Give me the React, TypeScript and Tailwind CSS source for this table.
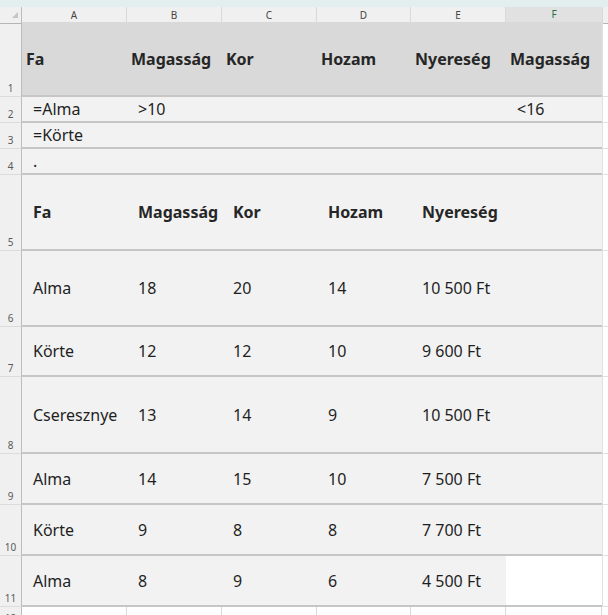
import React from 'react';

const cols = 'grid grid-cols-[22px_105px_95px_95px_94px_95px_96px_1fr]';

type Row = { n: number; h: string; cells: string[]; head?: boolean; bold?: boolean; lastWhite?: boolean };

const rows: Row[] = [
  { n: 1, h: 'h-[75px]', cells: ['Fa', 'Magasság', 'Kor', 'Hozam', 'Nyereség', 'Magasság'], head: true, bold: true },
  { n: 2, h: 'h-[26px]', cells: ['=Alma', '>10', '', '', '', '<16'] },
  { n: 3, h: 'h-[26px]', cells: ['=Körte', '', '', '', '', ''] },
  { n: 4, h: 'h-[26px]', cells: ['.', '', '', '', '', ''] },
  { n: 5, h: 'h-[76px]', cells: ['Fa', 'Magasság', 'Kor', 'Hozam', 'Nyereség', ''], bold: true },
  { n: 6, h: 'h-[76px]', cells: ['Alma', '18', '20', '14', '10 500 Ft', ''] },
  { n: 7, h: 'h-[50px]', cells: ['Körte', '12', '12', '10', '9 600 Ft', ''] },
  { n: 8, h: 'h-[77px]', cells: ['Cseresznye', '13', '14', '9', '10 500 Ft', ''] },
  { n: 9, h: 'h-[51px]', cells: ['Alma', '14', '15', '10', '7 500 Ft', ''] },
  { n: 10, h: 'h-[51px]', cells: ['Körte', '9', '8', '8', '7 700 Ft', ''] },
  { n: 11, h: 'h-[51px]', cells: ['Alma', '8', '9', '6', '4 500 Ft', ''], lastWhite: true },
];

const letters = ['A', 'B', 'C', 'D', 'E', 'F'];

function RowHeader({ n }: { n: number }) {
  return (
    <div className="flex items-end justify-center bg-[#f0f0f0] border-r border-r-[#bdbdbd] border-b border-b-[#dcdcdc] pb-[2px] text-[10px] leading-[12px] text-[#5a5a5a]">
      {n}
    </div>
  );
}

export default function App() {
  return (
    <div className="w-[608px] h-[615px] overflow-hidden bg-white font-['Noto_Sans',sans-serif] text-[16px] text-[#1f1f1f]">
      <div className="h-[7px] bg-[#e3eeee]" />
      <div className={`${cols} h-[15px]`}>
        <div className="relative bg-[#f0f0f0] border-r border-r-[#bdbdbd] border-b border-b-[#b5b5b5]">
          <svg className="absolute left-[12px] top-[5px]" width="6" height="6" viewBox="0 0 6 6">
            <polygon points="6,0 6,6 0,6" fill="#c4c4c4" />
          </svg>
        </div>
        {letters.map((l) =>
          l === 'F' ? (
            <div key={l} className="flex items-center justify-center bg-[#e1e1e1] border-b-2 border-b-[#217346] text-[10px] text-[#217346]">
              {l}
            </div>
          ) : (
            <div key={l} className="flex items-center justify-center bg-[#f0f0f0] border-r border-r-[#d9d9d9] border-b border-b-[#b5b5b5] text-[10px] text-[#444]">
              {l}
            </div>
          )
        )}
        <div className="bg-[#f0f0f0] border-l border-l-[#d9d9d9] border-b border-b-[#b5b5b5]" />
      </div>

      {rows.map((r) => (
        <div key={r.n} className={`${cols} ${r.h}`}>
          <RowHeader n={r.n} />
          {r.cells.map((c, i) => (
            <div
              key={i}
              className={`flex items-center whitespace-nowrap border-b-2 border-b-[#c6c6c6] ${
                r.head ? 'bg-[#d9d9d9] pl-[4px]' : r.lastWhite && i === 5 ? 'bg-white' : 'bg-[#f2f2f2] pl-[11px]'
              } ${r.bold ? 'font-bold text-[#262626]' : ''}`}
            >
              {c}
            </div>
          ))}
          <div className="border-l border-l-[#e0e0e0] border-b border-b-[#e0e0e0]" />
        </div>
      ))}

      <div className={`${cols} h-[20px]`}>
        <RowHeader n={12} />
        {letters.map((l) => (
          <div key={l} className="border-r border-r-[#d9d9d9]" />
        ))}
        <div />
      </div>
    </div>
  );
}
